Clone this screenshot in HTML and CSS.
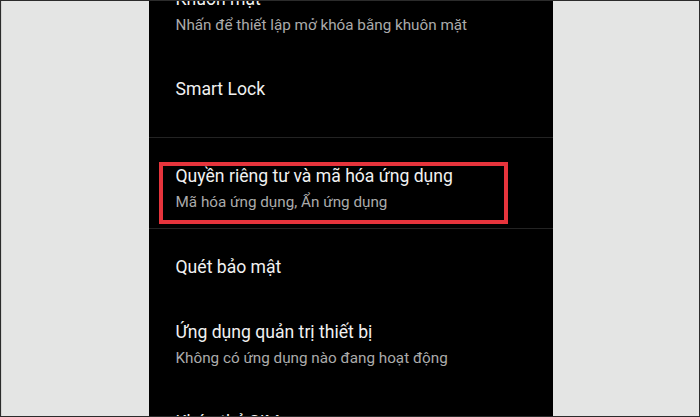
FILE: index.html
```html
<!DOCTYPE html>
<html lang="vi">
<head>
<meta charset="utf-8">
<title>Bảo mật</title>
<link rel="stylesheet" href="styles.css">
</head>
<body>
<div class="frame">
  <div class="side"></div>
  <main class="panel">
    <div class="list">
      <section class="group group-first">
        <div class="item">
          <div class="title">Khuôn mặt</div>
          <div class="sub">Nhấn để thiết lập mở khóa bằng khuôn mặt</div>
        </div>
        <div class="item">
          <div class="title">Smart Lock</div>
        </div>
      </section>
      <section class="group">
        <div class="item item-marked">
          <div class="title">Quyền riêng tư và mã hóa ứng dụng</div>
          <div class="sub">Mã hóa ứng dụng, Ẩn ứng dụng</div>
          <div class="mark"></div>
        </div>
      </section>
      <section class="group">
        <div class="item">
          <div class="title">Quét bảo mật</div>
        </div>
        <div class="item">
          <div class="title">Ứng dụng quản trị thiết bị</div>
          <div class="sub">Không có ứng dụng nào đang hoạt động</div>
        </div>
        <div class="item">
          <div class="title">Khóa thẻ SIM</div>
        </div>
      </section>
    </div>
  </main>
  <div class="side"></div>
</div>
</body>
</html>
```

FILE: styles.css
```css
* { box-sizing: border-box; }

html, body {
  margin: 0;
  padding: 0;
  width: 700px;
  height: 417px;
  overflow: hidden;
  background: #e4e5e4;
}

.frame {
  width: 700px;
  height: 417px;
  display: flex;
  border: 1px solid #2b2b2b;
  background: #e4e5e4;
}

.side {
  flex: 1 1 0;
}

.frame .side:first-child {
  border-left: 1px solid #d2d3d2;
}

.panel {
  width: 404px;
  flex: 0 0 404px;
  height: 100%;
  background: #000;
  overflow: hidden;
  font-family: Roboto, "Noto Sans", "Liberation Sans", sans-serif;
}

.list {
  margin-top: -34.5px;
}

.group + .group {
  border-top: 1px solid #232323;
  padding-top: 5.35px;
}

.group-first {
  padding-bottom: 15.65px;
}

.item {
  position: relative;
  padding: 18.5px 0 18.5px 27px;
}

.item-marked {
  padding-bottom: 13.15px;
}

.title {
  font-size: 17.6px;
  line-height: 28px;
  color: #f1f1f1;
  white-space: nowrap;
}

.sub {
  font-size: 15.25px;
  line-height: 25px;
  color: #ababab;
  white-space: nowrap;
}

.mark {
  position: absolute;
  left: 10px;
  right: 45px;
  top: 18.65px;
  bottom: 4px;
  border: 4px solid #e6343c;
  pointer-events: none;
}
```
